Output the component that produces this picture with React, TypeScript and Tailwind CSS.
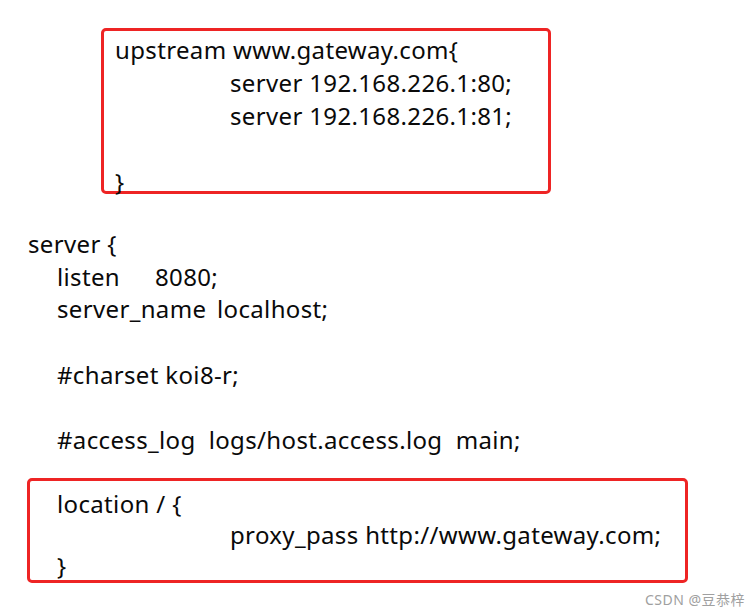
export default function App() {
  const font = "font-['Noto_Sans','Noto_Sans_CJK_SC',sans-serif]";
  return (
    <div className={`relative w-[750px] h-[615px] bg-white text-[#0a0a0a] text-[24px] tracking-[0.35px] ${font}`}>
      <div className="flex flex-col pt-[28px]">
        {/* upstream block */}
        <div className="ml-[101px] w-[450px] h-[166px] border-[3px] border-[#ee2424] rounded-[5px] pl-[11px] pt-[2px] leading-[33px]">
          <div>upstream www.gateway.com{'{'}</div>
          <div className="pl-[115px]">server 192.168.226.1:80;</div>
          <div className="pl-[115px]">server 192.168.226.1:81;</div>
          <div>&nbsp;</div>
          <div>{'}'}</div>
        </div>

        {/* server block */}
        <div className="mt-[34px] pl-[28px] leading-[32.7px]">
          <div>server {'{'}</div>
          <div className="pl-[29px] flex">
            <span className="w-[98px]">listen</span>
            <span>8080;</span>
          </div>
          <div className="pl-[29px] flex">
            <span className="w-[160px]">server_name</span>
            <span>localhost;</span>
          </div>
          <div>&nbsp;</div>
          <div className="pl-[29px]">#charset koi8-r;</div>
          <div>&nbsp;</div>
          <div className="pl-[29px]">#access_log&nbsp; logs/host.access.log&nbsp; main;</div>
        </div>

        {/* location block */}
        <div className="mt-[21px] ml-[27px] w-[661px] h-[105px] border-[3px] border-[#ee2424] rounded-[5px] pl-[27px] pt-[7px] leading-[31px]">
          <div>location / {'{'}</div>
          <div className="pl-[173px]">proxy_pass http://www.gateway.com;</div>
          <div>{'}'}</div>
        </div>
      </div>

      <div className="absolute right-[5px] bottom-[5px] text-[14px] tracking-[0.5px] text-[#a0a0a0] font-['Noto_Sans','Noto_Sans_CJK_SC',sans-serif]">
        CSDN @豆恭梓
      </div>
    </div>
  );
}
